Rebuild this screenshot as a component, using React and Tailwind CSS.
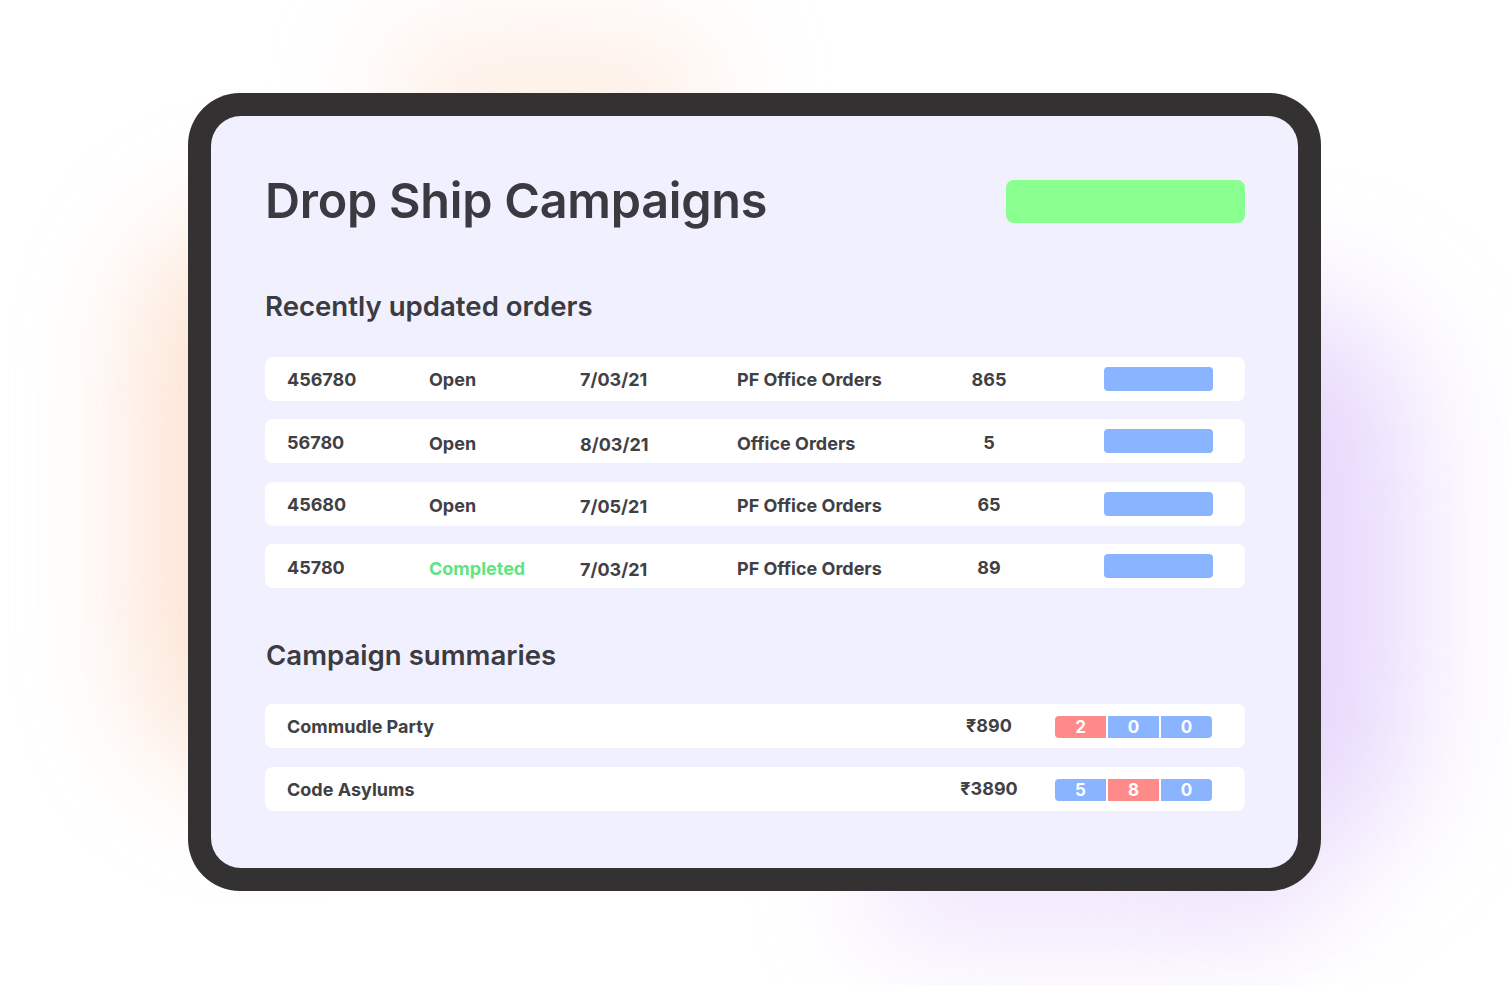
import React from 'react';

const orders = [
  { id: '456780', status: 'Open', date: '7/03/21', name: 'PF Office Orders', count: '865' },
  { id: '56780', status: 'Open', date: '8/03/21', name: 'Office Orders', count: '5' },
  { id: '45680', status: 'Open', date: '7/05/21', name: 'PF Office Orders', count: '65' },
  { id: '45780', status: 'Completed', date: '7/03/21', name: 'PF Office Orders', count: '89' },
];

const campaigns = [
  { name: 'Commudle Party', price: '₹890', stats: [['2', 'red'], ['0', 'blue'], ['0', 'blue']] },
  { name: 'Code Asylums', price: '₹3890', stats: [['5', 'blue'], ['8', 'red'], ['0', 'blue']] },
];

const OrderRow = ({ order, idx }) => {
  const nudge = idx > 0 ? 'translate-y-[2px]' : 'translate-y-[1px]';
  const dateNudge = idx > 0 ? 'translate-y-[3px]' : 'translate-y-[1px]';
  return (
    <div className="flex items-center h-[44px] bg-white rounded-lg pl-[22px] pr-[32px] text-[18px] font-bold text-[#404045]">
      <div className="w-[142px] translate-y-[1px]">{order.id}</div>
      <div className={`w-[151px] ${nudge} ${order.status === 'Completed' ? 'text-[#5fe482]' : ''}`}>{order.status}</div>
      <div className={`w-[157px] ${dateNudge}`}>{order.date}</div>
      <div className={`w-[204px] ${nudge}`}>{order.name}</div>
      <div className="w-[96px] text-center translate-y-[1px]">{order.count}</div>
      <div className="ml-auto w-[109px] h-[24px] rounded-[4px] bg-[#8ab4ff]" />
    </div>
  );
};

const CampaignRow = ({ c }) => (
  <div className="flex items-center h-[44px] bg-white rounded-lg pl-[22px] pr-[33px] text-[18px] font-bold text-[#404045]">
    <div className="flex-1 translate-y-[1px]">{c.name}</div>
    <div className="w-[96px] text-center">{c.price}</div>
    <div className="ml-[18px] flex gap-[2px] rounded-[4px] overflow-hidden translate-y-[1px]">
      {c.stats.map(([v, col], i) => (
        <div
          key={i}
          className={`w-[51px] h-[22px] flex items-center justify-center text-white text-[17px] font-bold leading-none ${col === 'red' ? 'bg-[#ff8a8a]' : 'bg-[#8ab4ff]'}`}
        >
          <span className="translate-y-[1px]">{v}</span>
        </div>
      ))}
    </div>
  </div>
);

export default function App() {
  return (
    <div className="relative w-full h-[985px] bg-white overflow-hidden" style={{ fontFamily: 'Inter, "Noto Sans", sans-serif' }}>
      {/* glows */}
      <div className="absolute left-[140px] top-[220px] w-[240px] h-[560px] rounded-full bg-[#fcd5bd] opacity-70 blur-[60px]" />
      <div className="absolute left-[380px] top-[30px] w-[340px] h-[130px] rounded-full bg-[#fde3d2] opacity-60 blur-[55px]" />
      <div className="absolute left-[1150px] top-[300px] w-[260px] h-[560px] rounded-full bg-[#dcc5fa] opacity-70 blur-[65px]" />
      <div className="absolute left-[860px] top-[810px] w-[460px] h-[140px] rounded-full bg-[#ecdcfb] opacity-70 blur-[55px]" />

      <div className="relative pt-[93px] pl-[188px]">
        <div className="w-[1133px] h-[798px] p-[23px] bg-[#333132] rounded-[52px]">
          <div className="w-full h-full bg-[#f1f0fe] rounded-[30px] pt-[61px] pl-[54px] pr-[53px]">
            <div className="flex items-center justify-between h-[48px]">
              <h1 className="text-[48.5px] leading-none font-semibold text-[#3a3a40] tracking-[-0.25px]">Drop Ship Campaigns</h1>
              <div className="w-[239px] h-[43px] rounded-lg bg-[#88ff8f]" />
            </div>

            <h2 className="mt-[68px] text-[27.6px] leading-none font-semibold text-[#3b3b41]">Recently updated orders</h2>
            <div className="mt-[36px] flex flex-col gap-[18.5px]">
              {orders.map((o, i) => (
                <OrderRow key={i} order={o} idx={i} />
              ))}
            </div>

            <h2 className="mt-[54px] pl-[1px] text-[27.6px] leading-none font-semibold text-[#3b3b41]">Campaign summaries</h2>
            <div className="mt-[34px] flex flex-col gap-[19px]">
              {campaigns.map((c, i) => (
                <CampaignRow key={i} c={c} />
              ))}
            </div>
          </div>
        </div>
      </div>
    </div>
  );
}
